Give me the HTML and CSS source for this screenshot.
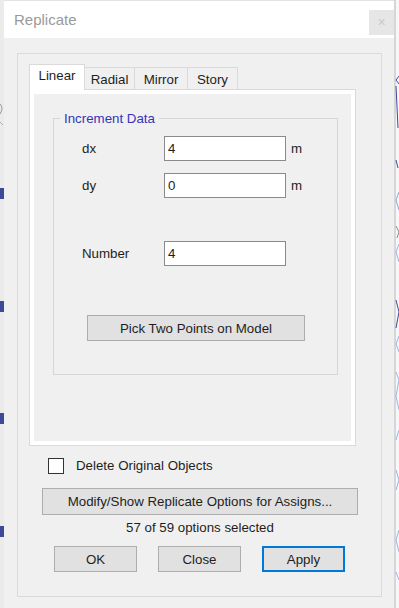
FILE: index.html
```html
<!DOCTYPE html>
<html lang="en">
<head>
    <meta charset="UTF-8">
    <title>Replicate</title>
    <link rel="stylesheet" href="styles.css">
</head>
<body>
    <div class="desk">
        <div class="side side-left">
            <svg width="4" height="608" viewBox="0 0 4 608">
                <rect x="0" y="0" width="4" height="608" fill="#ebebeb"/>
                <path d="M0 104 Q4 108 0 114" stroke="#9a9a9a" fill="none"/>
                <path d="M0 122 L3 125" stroke="#b0b0b0"/>
                <rect x="0" y="188" width="4" height="11" fill="#3e4a98"/>
                <rect x="0" y="301" width="4" height="11" fill="#3e4a98"/>
                <rect x="0" y="413" width="4" height="11" fill="#3e4a98"/>
                <rect x="0" y="526" width="4" height="11" fill="#3e4a98"/>
            </svg>
        </div>

        <div class="dialog">
            <div class="titlebar">
                <span class="title">Replicate</span>
                <span class="close">&#215;</span>
            </div>

            <div class="client">
                <div class="frame">
                    <div class="tabs">
                        <div class="tab active">Linear</div>
                        <div class="tab">Radial</div>
                        <div class="tab">Mirror</div>
                        <div class="tab">Story</div>
                    </div>

                    <div class="panel">
                        <fieldset class="group">
                            <legend>Increment Data</legend>
                            <div class="row">
                                <label for="dx">dx</label>
                                <input type="text" id="dx" value="4">
                                <span class="unit">m</span>
                            </div>
                            <div class="row">
                                <label for="dy">dy</label>
                                <input type="text" id="dy" value="0">
                                <span class="unit">m</span>
                            </div>
                            <div class="row row-number">
                                <label for="number">Number</label>
                                <input type="text" id="number" value="4">
                            </div>
                            <button class="btn pick">Pick Two Points on Model</button>
                        </fieldset>
                    </div>

                    <div class="check-row">
                        <span class="checkbox"></span>
                        <span>Delete Original Objects</span>
                    </div>

                    <button class="btn modify">Modify/Show Replicate Options for Assigns...</button>
                    <div class="status">57 of 59 options selected</div>

                    <div class="actions">
                        <button class="btn">OK</button>
                        <button class="btn">Close</button>
                        <button class="btn default">Apply</button>
                    </div>
                </div>
            </div>
        </div>

        <div class="side side-right">
            <svg width="5" height="608" viewBox="0 0 5 608">
                <rect x="0" y="0" width="2" height="608" fill="#d6d6d6"/>
                <rect x="2" y="0" width="3" height="608" fill="#f7f7fa"/>
                <path d="M5 76 L2 80 L5 84" stroke="#3d4a96" fill="none"/>
                <path d="M2 86 L4 128" stroke="#3d4a96" fill="none"/>
                <path d="M2 160 L4 168" stroke="#3d4a96" fill="none"/>
                <path d="M5 192 L2 200 L5 210" stroke="#8fa6d6" fill="none"/>
                <path d="M2 226 L5 232 L3 238" stroke="#8a8a8a" fill="none"/>
                <path d="M5 244 L2 252 L5 262" stroke="#9db3e0" fill="none"/>
                <path d="M2 300 L5 312 L2 328" stroke="#3d4a96" fill="none"/>
                <path d="M5 336 L2 344 L5 352" stroke="#9db3e0" fill="none"/>
                <path d="M2 372 L5 380 L2 396 L5 410" stroke="#9db3e0" fill="none"/>
                <path d="M5 430 L2 440" stroke="#9db3e0" fill="none"/>
                <path d="M2 470 L5 480 L2 490" stroke="#9db3e0" fill="none"/>
                <path d="M5 530 L2 540 L5 552" stroke="#9db3e0" fill="none"/>
                <path d="M2 572 L5 580" stroke="#9db3e0" fill="none"/>
            </svg>
        </div>
    </div>
</body>
</html>
```

FILE: styles.css
```css
:root {
    --face: #f0f0f0;
    --btn-face: #e1e1e1;
    --btn-border: #adadad;
    --line: #dadada;
    --text: #1e1e1e;
}

* {
    box-sizing: border-box;
}

body {
    margin: 0;
    width: 399px;
    height: 608px;
    overflow: hidden;
    font-family: "Liberation Sans", Arial, sans-serif;
    font-size: 13.3px;
    color: var(--text);
    background: #ebebeb;
}

.desk {
    display: flex;
    height: 608px;
}

.side svg {
    display: block;
}

.dialog {
    width: 390px;
    height: 608px;
    display: flex;
    flex-direction: column;
}

.titlebar {
    height: 38px;
    background: #fff;
    border-top: 1px solid #e2e2e2;
    display: flex;
    align-items: flex-start;
    justify-content: space-between;
}

.title {
    margin: 10px 0 0 10px;
    font-size: 15px;
    color: #9a9a9a;
}

.close {
    margin-top: 9px;
    width: 25px;
    height: 25px;
    background: #e6e6e6;
    color: #cacaca;
    font-size: 14px;
    line-height: 24px;
    text-align: center;
}

.client {
    flex: 1;
    background: var(--face);
    padding: 15px 0 0 13px;
}

.frame {
    width: 365px;
    height: 544px;
    border: 1px solid var(--line);
    padding: 10px 0 0 11px;
}

/* tab strip */
.tabs {
    display: flex;
    align-items: flex-end;
    height: 25px;
}

.tab {
    height: 22px;
    padding-top: 4px;
    border: 1px solid var(--line);
    border-bottom: none;
    margin-left: -1px;
    text-align: center;
    background: var(--face);
}

.tab:nth-child(2) { width: 51px; }
.tab:nth-child(3) { width: 54px; }
.tab:nth-child(4) { width: 51px; }

.tab.active {
    width: 56px;
    height: 26px;
    margin-left: 0;
    margin-bottom: -1px;
    padding-top: 3px;
    background: #fff;
    position: relative;
    z-index: 1;
}

.panel {
    width: 327px;
    height: 357px;
    border: 1px solid var(--line);
    box-shadow: inset 0 0 0 4px #fff;
    padding: 21px 0 0 23px;
}

.group {
    margin: 0;
    width: 285px;
    height: 264px;
    border: 1px solid #d5d5d5;
    padding: 10px 0 0 0;
}

.group legend {
    margin-left: 6px;
    padding: 0 4px;
    color: #3434bc;
    line-height: 15px;
}

.row {
    display: flex;
    align-items: center;
    height: 25px;
    margin: 0 0 12px 28px;
}

.row-number {
    margin-top: 43px;
}

.row label {
    width: 82px;
}

.row input {
    width: 122px;
    height: 25px;
    border: 1px solid #8a8a8a;
    padding: 0 3px;
    font-family: inherit;
    font-size: 13.3px;
    color: var(--text);
    background: #fff;
}

.unit {
    margin-left: 5px;
}

.btn {
    height: 26px;
    border: 1px solid var(--btn-border);
    background: var(--btn-face);
    font-family: inherit;
    font-size: 13.3px;
    color: var(--text);
    padding: 0;
}

.pick {
    display: block;
    width: 218px;
    margin: 49px 0 0 33px;
}

.check-row {
    display: flex;
    align-items: center;
    gap: 12px;
    margin: 11px 0 0 19px;
    height: 17px;
}

.checkbox {
    width: 16px;
    height: 16px;
    border: 1px solid #333;
    background: #fff;
}

.modify {
    display: block;
    width: 316px;
    height: 27px;
    margin: 14px 0 0 13px;
}

.status {
    width: 316px;
    margin-left: 13px;
    text-align: center;
    line-height: 26px;
}

.actions {
    display: flex;
    gap: 21px;
    margin: 5px 0 0 25px;
}

.actions .btn {
    width: 83px;
}

.btn.default {
    border: 2px solid #0078d7;
}
```
